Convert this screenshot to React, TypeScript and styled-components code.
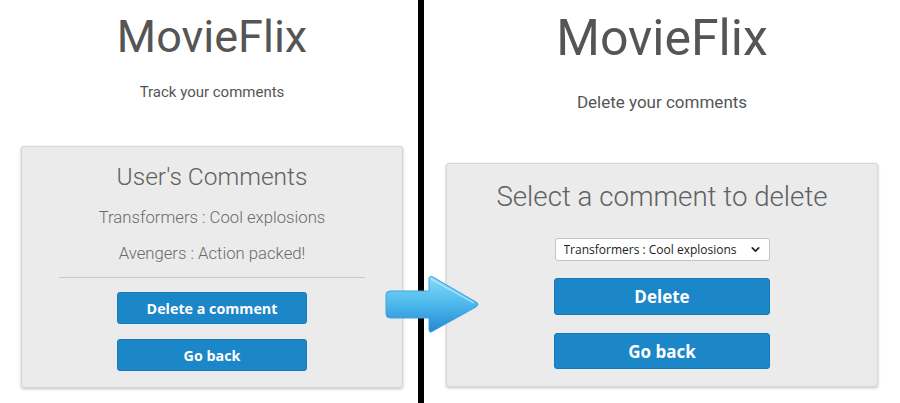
import styled, { createGlobalStyle } from "styled-components";
import { ChevronDown } from "lucide-react";

const GlobalStyle = createGlobalStyle`
  html, body {
    margin: 0;
    padding: 0;
    background: #fff;
  }
  body {
    font-family: Roboto, "Liberation Sans", sans-serif;
  }
`;

const comments = [
  { movie: "Transformers", text: "Cool explosions" },
  { movie: "Avengers", text: "Action packed!" },
];

function ArrowIcon() {
  return (
    <svg width="96" height="60" viewBox="0 0 96 60">
      <defs>
        <linearGradient id="arrowFill" x1="0" y1="0" x2="0" y2="1">
          <stop offset="0" stopColor="#86dcf9" />
          <stop offset="0.5" stopColor="#4cb8ec" />
          <stop offset="1" stopColor="#2687d2" />
        </linearGradient>
      </defs>
      <path
        d="M5 16 H44 V4 Q44 0 48 2 L91 27 Q95 29 91 32 L48 56 Q44 59 44 54 V43 H5 Q1 43 1 39 V20 Q1 16 5 16 Z"
        fill="url(#arrowFill)"
        stroke="#3ea4e0"
        strokeWidth="1"
      />
      <path
        d="M46 4 L89 28"
        stroke="#c9f1ff"
        strokeWidth="1.2"
        fill="none"
        opacity="0.8"
      />
    </svg>
  );
}

export default function App() {
  return (
    <>
      <GlobalStyle />
      <Stl.Page>
        <Stl.Panel $w={418} $padLeft={21} $padRight={15}>
          <Stl.Brand $size={45} $top={14}>
            MovieFlix
          </Stl.Brand>
          <Stl.Tagline $size={15} $top={26}>
            Track your comments
          </Stl.Tagline>
          <Stl.Card $top={46} $padTop={17} $padBottom={16}>
            <Stl.CardTitle $size={24.5}>User's Comments</Stl.CardTitle>
            {comments.map((c, i) => (
              <Stl.Comment key={i} $top={i === 0 ? 20 : 19}>
                {c.movie} : {c.text}
              </Stl.Comment>
            ))}
            <Stl.Rule />
            <Stl.Button $w={190} $h={32} $size={14.3} $top={14}>
              Delete a comment
            </Stl.Button>
            <Stl.Button $w={190} $h={32} $size={14.3} $top={15}>
              Go back
            </Stl.Button>
          </Stl.Card>
        </Stl.Panel>

        <Stl.Divider />

        <Stl.Panel $w={476} $padLeft={22} $padRight={22}>
          <Stl.Brand $size={50} $top={13}>
            MovieFlix
          </Stl.Brand>
          <Stl.Tagline $size={17} $top={31}>
            Delete your comments
          </Stl.Tagline>
          <Stl.Card $top={52} $padTop={19} $padBottom={17}>
            <Stl.CardTitle $size={27.7}>Select a comment to delete</Stl.CardTitle>
            <Stl.SelectWrap>
              <Stl.Select defaultValue="0">
                {comments.map((c, i) => (
                  <option key={i} value={String(i)}>
                    {c.movie} : {c.text}
                  </option>
                ))}
              </Stl.Select>
              <Stl.Chevron>
                <ChevronDown size={13} strokeWidth={3} />
              </Stl.Chevron>
            </Stl.SelectWrap>
            <Stl.Button $w={216} $h={37} $size={17} $top={17}>
              Delete
            </Stl.Button>
            <Stl.Button $w={216} $h={36} $size={17} $top={18}>
              Go back
            </Stl.Button>
          </Stl.Card>
        </Stl.Panel>

        <Stl.Arrow>
          <ArrowIcon />
        </Stl.Arrow>
      </Stl.Page>
    </>
  );
}

const Stl = {
  Page: styled.div`
    position: relative;
    display: flex;
    width: 900px;
    height: 403px;
    overflow: hidden;
    background: #fff;
  `,
  Panel: styled.div<{ $w: number; $padLeft: number; $padRight: number }>`
    flex: 0 0 auto;
    width: ${({ $w }) => $w}px;
    box-sizing: border-box;
    padding: 0 ${({ $padRight }) => $padRight}px 0
      ${({ $padLeft }) => $padLeft}px;
    display: flex;
    flex-direction: column;
    align-items: center;
  `,
  Divider: styled.div`
    flex: 0 0 6px;
    background: #000;
  `,
  Brand: styled.h1<{ $size: number; $top: number }>`
    margin: ${({ $top }) => $top}px 0 0;
    font-family: Roboto, "Liberation Sans", sans-serif;
    font-weight: 400;
    font-size: ${({ $size }) => $size}px;
    line-height: ${({ $size }) => $size}px;
    color: #555;
  `,
  Tagline: styled.p<{ $size: number; $top: number }>`
    margin: ${({ $top }) => $top}px 0 0;
    font-family: Roboto, "Liberation Sans", sans-serif;
    font-weight: 400;
    font-size: ${({ $size }) => $size}px;
    line-height: ${({ $size }) => $size}px;
    color: #555;
  `,
  Card: styled.div<{ $top: number; $padTop: number; $padBottom: number }>`
    align-self: stretch;
    margin-top: ${({ $top }) => $top}px;
    padding: ${({ $padTop }) => $padTop}px 0
      ${({ $padBottom }) => $padBottom}px;
    background: #ebebeb;
    border: 1px solid #d8d8d8;
    border-radius: 3px;
    box-shadow: 0 1px 3px rgba(0, 0, 0, 0.25);
    display: flex;
    flex-direction: column;
    align-items: center;
  `,
  CardTitle: styled.h2<{ $size: number }>`
    margin: 0;
    font-family: Roboto, "Liberation Sans", sans-serif;
    font-weight: 300;
    font-size: ${({ $size }) => $size}px;
    line-height: ${({ $size }) => Math.round($size)}px;
    color: #616161;
  `,
  Comment: styled.p<{ $top: number }>`
    margin: ${({ $top }) => $top}px 0 0;
    font-family: Roboto, "Liberation Sans", sans-serif;
    font-weight: 300;
    font-size: 16.7px;
    line-height: 17px;
    color: #6a6a6a;
  `,
  Rule: styled.hr`
    width: 306px;
    margin: 15px 0 0;
    border: 0;
    border-top: 1px solid #c9c9c9;
  `,
  Button: styled.button<{ $w: number; $h: number; $size: number; $top: number }>`
    margin-top: ${({ $top }) => $top}px;
    width: ${({ $w }) => $w}px;
    height: ${({ $h }) => $h}px;
    padding: 0;
    border: 1px solid #1879b8;
    border-radius: 3px;
    background: #1b86c8;
    color: #fff;
    font-family: "Open Sans", "Noto Sans", sans-serif;
    font-weight: 700;
    font-size: ${({ $size }) => $size}px;
    cursor: pointer;
  `,
  SelectWrap: styled.div`
    position: relative;
    margin-top: 27px;
    width: 215px;
    height: 23px;
  `,
  Select: styled.select`
    appearance: none;
    -webkit-appearance: none;
    width: 100%;
    height: 100%;
    box-sizing: border-box;
    padding: 0 0 0 8px;
    border: 1px solid #c4c4c4;
    border-radius: 3px;
    background: #fff;
    color: #222;
    font-family: "Open Sans", "Noto Sans", sans-serif;
    font-size: 12px;
    outline: none;
  `,
  Chevron: styled.span`
    position: absolute;
    right: 8px;
    top: 5px;
    display: flex;
    color: #222;
    pointer-events: none;
  `,
  Arrow: styled.div`
    position: absolute;
    left: 385px;
    top: 275px;
    display: flex;
  `,
};
